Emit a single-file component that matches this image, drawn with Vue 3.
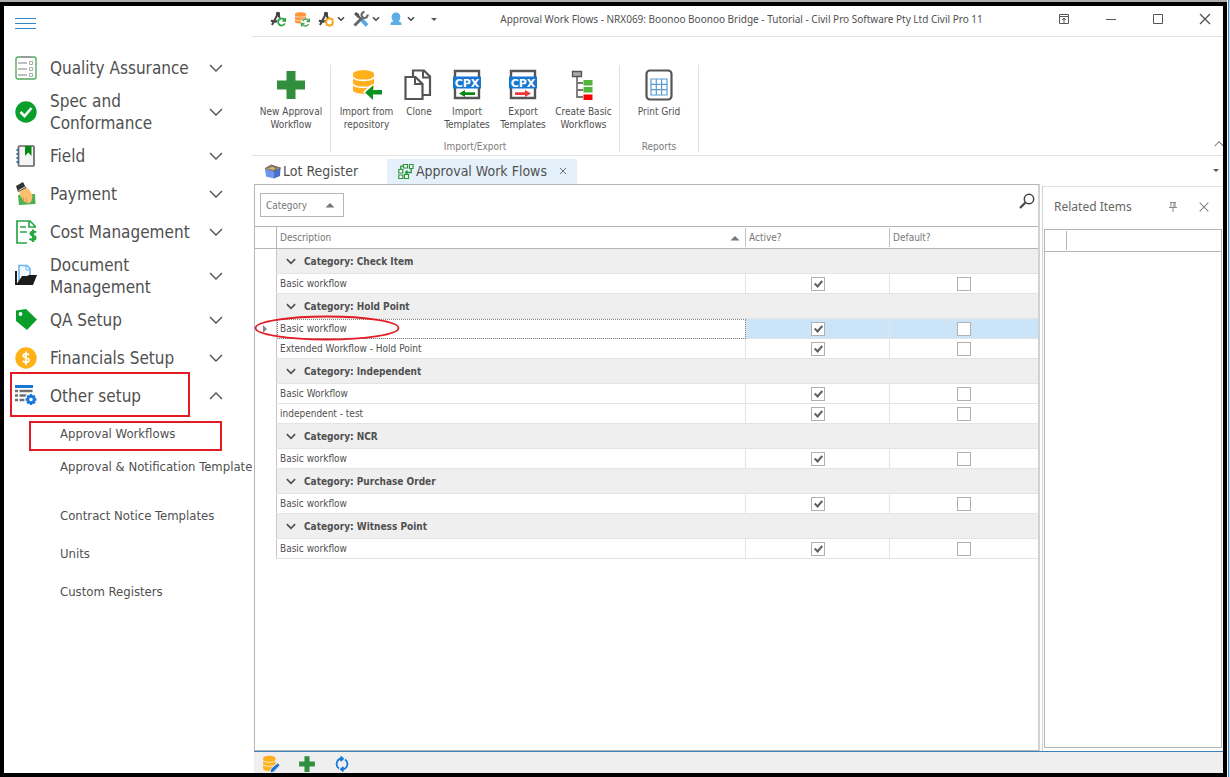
<script setup>
import { reactive, ref } from 'vue'

const icons = {
  checklist: '<rect x="1" y="1" width="20" height="22" rx="2" fill="#fff" stroke="#55a860" stroke-width="1.4"/><path d="M6 1h10" stroke="#999" stroke-width="2"/><path d="M3 7h9M3 13h9M3 19h9" stroke="#aaa" stroke-width="1.4"/><path d="M14.500 5.500h3v3h-3zM14.500 11.500h3v3h-3zM14.500 17.500h3v3h-3z" fill="none" stroke="#aaa"/>',
  tick: '<circle cx="11" cy="12" r="10.700" fill="#0a9f2b"/><path d="M5.500 12l4 4 7-8" fill="none" stroke="#fff" stroke-width="2.600"/>',
  book: '<rect x="3.500" y="2" width="15.500" height="20" rx="1" fill="#f6f6f6" stroke="#666" stroke-width="1.700"/><path d="M10 2h6.500v10l-3.200-3.500L10 12z" fill="#068a12"/><path d="M1.500 6h2M1.500 10h2M1.500 14h2M1.500 18h2" stroke="#2d6ea8" stroke-width="2"/>',
  hand: '<path d="M3 13l17-1 .5 10L4 23z" fill="#4caf50"/><path d="M4 8l7-3c4 3 6 6 6.500 10l-1.500 5-3 1.500-4-2-4-6z" fill="#fbbf70"/><path d="M9 20l-1-5M12 21l-1-6" stroke="#d99545" stroke-width=".8"/><path d="M1 4l7-4 3 6-8 4z" fill="#333"/><path d="M3.500 8.500L10 5" stroke="#eee" stroke-width="1"/>',
  cost: '<path d="M20 8V6l-5-5H2v22h10M14 1v6h6" fill="none" stroke="#28a745" stroke-width="1.700"/><path d="M5 7h6M5 12h7" stroke="#28a745" stroke-width="1.600"/><path d="M21 12.500c-1-1-5-1.500-5.500.800-.5 3 5.500 1.500 5 4.700-.4 2.500-4.500 2.200-6 .8M18 9.500v12.500" fill="none" stroke="#28a745" stroke-width="2.200"/>',
  folder: '<path d="M4 19V1.500h8l3 3V15" fill="#f4faff" stroke="#66b5ee" stroke-width="1.500"/><path d="M11 2v4h4" fill="none" stroke="#66b5ee"/><path d="M0 7v14h2V7z" fill="#1c1c1c"/><path d="M1 21l6-9h5l2-1h8l-4 10z" fill="#1c1c1c"/>',
  tag: '<path d="M1 2.500L11 1l11 10.500L12 22 1 13z" fill="#0a9f2b"/><circle cx="5.500" cy="6" r="1.900" fill="#fff"/>',
  coin: '<circle cx="11" cy="12" r="10.700" fill="#ffb118"/><path d="M14 8.800c-1.300-1.300-5.500-1.600-5.800.7-.2 2.800 6 1.600 5.800 4.800-.3 2.400-4.600 2.100-6.200.7M11 5.500v13.500" fill="none" stroke="#fff" stroke-width="1.700"/>',
  listgear: '<path d="M0 1h18v3H0z" fill="#1976d2"/><path d="M0 7h3M4.500 7h13M0 11.500h3M4.500 11.500h7M0 16h3M4.500 16h5" stroke="#707070" stroke-width="2.600"/><circle cx="16" cy="15.500" r="6.500" fill="#fff"/><circle cx="16" cy="15.500" r="3.200" fill="#fff" stroke="#1b79dd" stroke-width="2.800"/><path d="M16 10v2M16 19v2M10.500 15.500h2M19.500 15.500h2M12.200 11.700l1.500 1.500M18.300 17.800l1.500 1.500M12.200 19.300l1.500-1.500M18.300 13.200l1.500-1.500" stroke="#1b79dd" stroke-width="2.400"/>',
  compassSync: '<path d="M2 14L7.500 3.500M8 3l4.500 10M1 9.500c4 2 7 1 9-1" stroke="#444" stroke-width="2" fill="none"/><circle cx="8" cy="3" r="2.200" fill="#444"/><circle cx="11.500" cy="11" r="4.400" fill="#fff"/><path d="M14.800 9.500a3.500 3.500 0 1 0 0 3M15.500 7v3h-3" fill="none" stroke="#22a33c" stroke-width="1.700"/>',
  dbSync: '<path d="M1 3c0-2.500 11-2.500 11 0v8c0 2-11 2-11 0z" fill="#ff963c"/><path d="M1 5c1 1.500 10 1.500 11 0M1 8.500c1 1.500 10 1.500 11 0" fill="none" stroke="#fff" stroke-width=".6"/><circle cx="11.500" cy="11.500" r="4.600" fill="#fff"/><path d="M15 10.500a3.500 3.500 0 0 0-6.500-.5M8 12.500a3.500 3.500 0 0 0 6.500.5M15.500 7.500v3h-3M7.500 15.500v-3h3" fill="none" stroke="#4aa35c" stroke-width="1.400"/>',
  compassGear: '<path d="M2 14L7.500 3.500M8 3l4.500 10M1 9.500c4 2 7 1 9-1" stroke="#444" stroke-width="2" fill="none"/><circle cx="8" cy="3" r="2.200" fill="#444"/><circle cx="11.500" cy="11" r="3.400" fill="#fff" stroke="#f6ab20" stroke-width="1.900"/><path d="M11.500 5.800v2M11.500 14v2M6.300 11h2M14.700 11h2M7.900 7.400l1.300 1.300M13.800 13.300l1.300 1.300M7.900 14.600l1.300-1.300M13.800 8.700l1.300-1.300" stroke="#f6ab20" stroke-width="1.600"/>',
  tools: '<path d="M3 3l8 8" stroke="#555" stroke-width="2"/><path d="M1 3l2-2 3 2 .5 2.500L5 7z" fill="#555"/><path d="M1.500 14.500L9 7" stroke="#666" stroke-width="3"/><path d="M14.500 3.500a3 3 0 1 1-3-2.500" fill="none" stroke="#666" stroke-width="2.200"/><path d="M9 9l5 5.500" stroke="#55a7ee" stroke-width="4"/>',
  user: '<path d="M2.500 14c0-3.500 2-3.500 3-3.500-3-3-2.500-9 2.500-9s5.500 6 2.500 9c1 0 3 0 3 3.500z" fill="#5aaee4"/>',
  plus: '<path d="M11.500 2h9v9.500H30v9h-9.500V30h-9v-9.500H2v-9h9.500z" fill="#2f8f3c"/>',
  dbImport: '<path d="M2 5c0-5 21-5 21 0v16c0 5-21 5-21 0z" fill="#ffb01c"/><path d="M2 8c2 4.500 19 4.500 21 0M2 15c2 4.500 19 4.500 21 0" fill="none" stroke="#fff" stroke-width="1.600"/><path d="M12 23l9-8v5h10v7H21v4z" fill="#fff"/><path d="M14 23.500l8-7V21h9v4.500h-9V31z" fill="#0a9422"/>',
  clone: '<path d="M10 8V1.500h11l6 6V26h-8" fill="#fff" stroke="#555" stroke-width="2.200"/><path d="M20 2v6.500h7" fill="none" stroke="#555" stroke-width="2"/><path d="M2.500 8h10l7 7v15h-17z" fill="#fff" stroke="#555" stroke-width="2.200"/><path d="M12 8.500V15h7" fill="none" stroke="#555" stroke-width="2"/>',
  cpxImport: '<path d="M4 2h24v27H4z" fill="#fff" stroke="#555" stroke-width="2.400"/><path d="M8 24.500l6-3.500v2.300h10v2.600H14V28z" fill="#078a12"/><path d="M2 7.500h28v12H2z" fill="#1677d2"/><text x="16" y="17.500" text-anchor="middle" font-family="DejaVu Sans, sans-serif" font-weight="700" font-size="11" fill="#fff">CPX</text>',
  cpxExport: '<path d="M4 2h24v27H4z" fill="#fff" stroke="#555" stroke-width="2.400"/><path d="M24 24.500L18 21v2.300H8v2.600h10V28z" fill="#f13838"/><path d="M2 7.500h28v12H2z" fill="#1677d2"/><text x="16" y="17.500" text-anchor="middle" font-family="DejaVu Sans, sans-serif" font-weight="700" font-size="11" fill="#fff">CPX</text>',
  tree: '<path d="M9 6v23M9 14h6M9 21h6M9 28h6" fill="none" stroke="#777" stroke-width="1.800"/><path d="M4.500 2.500h9V7.500h-9z" fill="#aaa" stroke="#555" stroke-width="1.300"/><path d="M15.500 11h9v5.500h-9zM15.500 18h9v5.500h-9z" fill="#52b43a"/><path d="M15.500 25.500h9V31h-9z" fill="#f00"/>',
  printGrid: '<rect x="3.500" y="1.500" width="25" height="29" rx="3.500" fill="#fff" stroke="#555" stroke-width="2.200"/><path d="M8 10h16v16H8zM8 15.300h16M8 20.600h16M13.300 10v16M18.600 10v16" fill="none" stroke="#5b9bd5" stroke-width="1.200"/>',
  lot: '<path d="M0 6l9 2v7.500l-8-2z" fill="#6f95ef"/><path d="M9 8l6.500-3-.5 8-6 2.500z" fill="#4b6fc9"/><path d="M0 5.500L6 2l9.500 3L9 8z" fill="#c9b27c"/><path d="M3 5l4-2 5 2-3 2M0 5.500L6 2l9.500 3L9 8z" fill="none" stroke="#55504a" stroke-width=".8"/>',
  flow: '<path d="M5.500 1.500h4v3.500h-4zM11.500 1.500H15v4h-3.500zM.8 6.500h4v3.500h-4zM.8 12h4v3.500h-4zM6.500 11.500h4v4h-4z" fill="#fff" stroke="#2c9438" stroke-width="1.200"/><path d="M2.800 6V3.200h2.500M13.200 6v3.500h-5M9.500 7.500l-2 2 2 2" fill="none" stroke="#2c9438" stroke-width="1.300"/>',
  search: '<circle cx="10" cy="6" r="4.700" fill="none" stroke="#444" stroke-width="1.500"/><path d="M6.500 9.500L1 15" stroke="#444" stroke-width="2.200"/>',
  pin: '<path d="M5 3.500h6M6 3.500v5M10 3.500v5M9 4v4.500M4 8.500h8M8 8.500V13" fill="none" stroke="#888" stroke-width="1"/>',
  close: '<path d="M3 3l10 10M13 3L3 13" stroke="currentColor" stroke-width="1.300"/>',
  minimise: '<path d="M3 8.500h10" stroke="#555"/>',
  maximise: '<path d="M3.500 3.500h9v9h-9z" fill="none" stroke="#555"/>',
  ribbonToggle: '<path d="M3.500 3.500h9v9h-9zM3 5.500h10M8 12V7M6 9l2-2 2 2" fill="none" stroke="#555"/>',
  chevron: '<path d="M2 5l6 6 6-6" fill="none" stroke="currentColor" stroke-width="1.400"/>',
  chevronUp: '<path d="M2 11l6-6 6 6" fill="none" stroke="currentColor" stroke-width="1.400"/>',
  groupOpen: '<path d="M2.500 5.500L8 11l5.500-5.500" fill="none" stroke="currentColor" stroke-width="2.200"/>',
  groupClosed: '<path d="M5.500 2.500L11 8l-5.500 5.500" fill="none" stroke="currentColor" stroke-width="2.200"/>',
  smallChevron: '<path d="M4.500 6l3.500 3.500L11.500 6" fill="none" stroke="#444" stroke-width="1.700"/>',
  caret: '<path d="M5 7h6l-3 3z" fill="#555"/>',
  sortUp: '<path d="M3.500 10.500h9L8 6z" fill="#777"/>',
  dbEdit: '<path d="M1 3c0-3 11-3 11 0v9c0 3-11 3-11 0z" fill="#ffb01c"/><path d="M1 5c1 2 10 2 11 0M1 8.500c1 2 10 2 11 0" fill="none" stroke="#fff" stroke-width=".7"/><path d="M7 16l1-4 6-5 2 2-5.500 6z" fill="#1976d2" stroke="#efefef" stroke-width=".8"/>',
  refresh: '<path d="M8 2.500A5.500 5.500 0 0 0 5 12.500M8 13.500A5.500 5.500 0 0 0 11 3.500M6.500 .5L9 2.700 6.500 5M9.500 11L7 13.300 9.500 15.500" fill="none" stroke="#1b79dd" stroke-width="1.800"/>'
}

const nav = [
  { label: 'Quality Assurance', icon: 'checklist' },
  { label: 'Spec and Conformance', icon: 'tick', tall: true },
  { label: 'Field', icon: 'book' },
  { label: 'Payment', icon: 'hand' },
  { label: 'Cost Management', icon: 'cost' },
  { label: 'Document Management', icon: 'folder', tall: true },
  { label: 'QA Setup', icon: 'tag' },
  { label: 'Financials Setup', icon: 'coin' },
  { label: 'Other setup', icon: 'listgear', open: true }
]

const subNav = [
  { label: 'Approval Workflows', marked: true },
  { label: 'Approval & Notification Templates', tall: true },
  { label: 'Contract Notice Templates' },
  { label: 'Units' },
  { label: 'Custom Registers' }
]

const quick = [
  { icon: 'compassSync', label: 'Refresh project' },
  { icon: 'dbSync', label: 'Refresh data' },
  { icon: 'compassGear', label: 'Project settings', menu: true },
  { icon: 'tools', label: 'Tools', menu: true },
  { icon: 'user', label: 'User', menu: true }
]

const windowButtons = [
  { icon: 'ribbonToggle', label: 'Ribbon display' },
  { icon: 'minimise', label: 'Minimise' },
  { icon: 'maximise', label: 'Maximise' },
  { icon: 'close', label: 'Close' }
]

const ribbon = [
  { caption: '', size: 'narrow', buttons: [{ icon: 'plus', lines: ['New Approval', 'Workflow'], size: 'large' }] },
  {
    caption: 'Import/Export',
    size: 'wide',
    buttons: [
      { icon: 'dbImport', lines: ['Import from', 'repository'], size: 'medium' },
      { icon: 'clone', lines: ['Clone'], size: 'tiny' },
      { icon: 'cpxImport', lines: ['Import', 'Templates'], size: 'small' },
      { icon: 'cpxExport', lines: ['Export', 'Templates'], size: 'small' },
      { icon: 'tree', lines: ['Create Basic', 'Workflows'], size: 'medium' }
    ]
  },
  { caption: 'Reports', size: 'narrow', buttons: [{ icon: 'printGrid', lines: ['Print Grid'], size: 'large' }] }
]

const row = (name, current = false) => ({ name, active: true, isDefault: false, current })
const groups = reactive([
  { name: 'Check Item', open: true, rows: [row('Basic workflow')] },
  { name: 'Hold Point', open: true, rows: [row('Basic workflow', true), row('Extended Workflow - Hold Point')] },
  { name: 'Independent', open: true, rows: [row('Basic Workflow'), row('independent - test')] },
  { name: 'NCR', open: true, rows: [row('Basic workflow')] },
  { name: 'Purchase Order', open: true, rows: [row('Basic workflow')] },
  { name: 'Witness Point', open: true, rows: [row('Basic workflow')] }
])
const showSub = ref(true)
</script>

<template>
  <div class="screen">
    <div class="window">
      <aside class="sidebar">
        <button class="burger" aria-label="Menu"><i></i><i></i><i></i></button>
        <nav>
          <template v-for="item in nav" :key="item.label">
            <button class="nav-row" :class="{ tall: item.tall, marked: item.open }" @click="item.open && (showSub = !showSub)">
              <svg class="nav-icon" viewBox="0 0 22 24" v-html="icons[item.icon]"></svg>
              <span class="nav-label">{{ item.label }}</span>
              <svg class="i16" viewBox="0 0 16 16" v-html="item.open ? icons.chevronUp : icons.chevron"></svg>
            </button>
          </template>
          <div v-if="showSub" class="sub">
            <a v-for="s in subNav" :key="s.label" href="#" :class="{ tall: s.tall, marked: s.marked }">{{ s.label }}</a>
          </div>
        </nav>
      </aside>

      <main class="main">
        <header class="titlebar">
          <div class="quick">
            <button v-for="q in quick" :key="q.icon" :class="{ menu: q.menu }" :aria-label="q.label">
              <svg class="i16" viewBox="0 0 16 16" v-html="icons[q.icon]"></svg>
              <svg v-if="q.menu" class="i14" viewBox="0 0 16 16" v-html="icons.smallChevron"></svg>
            </button>
            <button class="more" aria-label="Customise toolbar"><svg class="i16" viewBox="0 0 16 16" v-html="icons.caret"></svg></button>
          </div>
          <h1>Approval Work Flows - NRX069: Boonoo Boonoo Bridge - Tutorial - Civil Pro Software Pty Ltd Civil Pro 11</h1>
          <div class="winbtns">
            <button v-for="b in windowButtons" :key="b.icon" :aria-label="b.label">
              <svg class="i16" viewBox="0 0 16 16" v-html="icons[b.icon]"></svg>
            </button>
          </div>
        </header>

        <section class="ribbon">
          <div v-for="g in ribbon" :key="g.size + g.caption" class="rgroup" :class="g.size">
            <div class="rbuttons">
              <button v-for="b in g.buttons" :key="b.icon" class="rbtn" :class="b.size">
                <svg viewBox="0 0 32 32" v-html="icons[b.icon]"></svg>
                <span v-for="l in b.lines" :key="l">{{ l }}</span>
              </button>
            </div>
            <div class="rcaption">{{ g.caption }}</div>
          </div>
          <button class="collapse" aria-label="Collapse ribbon"><svg class="i12" viewBox="0 0 16 16" v-html="icons.chevronUp"></svg></button>
        </section>

        <div class="tabs">
          <button class="tab"><svg class="i16" viewBox="0 0 16 16" v-html="icons.lot"></svg>Lot Register</button>
          <div class="tab active">
            <button class="tab-name"><svg class="i16" viewBox="0 0 16 16" v-html="icons.flow"></svg>Approval Work Flows</button>
            <button class="tab-close" aria-label="Close tab"><svg viewBox="0 0 16 16" v-html="icons.close"></svg></button>
          </div>
          <button class="tab-menu" aria-label="Tab list"><svg class="i16" viewBox="0 0 16 16" v-html="icons.caret"></svg></button>
        </div>

        <div class="content">
          <section class="grid">
            <div class="group-panel">
              <button class="group-chip">Category<svg class="i16" viewBox="0 0 16 16" v-html="icons.sortUp"></svg></button>
              <button class="search" aria-label="Search"><svg class="i16" viewBox="0 0 16 16" v-html="icons.search"></svg></button>
            </div>
            <table>
              <colgroup><col class="c-ind" /><col /><col class="c-active" /><col class="c-default" /></colgroup>
              <thead>
                <tr>
                  <th></th>
                  <th><div class="head"><span>Description</span><svg class="i16" viewBox="0 0 16 16" v-html="icons.sortUp"></svg></div></th>
                  <th><div class="head">Active?</div></th>
                  <th><div class="head">Default?</div></th>
                </tr>
              </thead>
              <tbody v-for="g in groups" :key="g.name">
                <tr class="grow">
                  <td class="ind"></td>
                  <td colspan="3">
                    <button @click="g.open = !g.open">
                      <svg class="i12" viewBox="0 0 16 16" v-html="g.open ? icons.groupOpen : icons.groupClosed"></svg>Category: {{ g.name }}
                    </button>
                  </td>
                </tr>
                <template v-if="g.open">
                  <tr v-for="r in g.rows" :key="r.name" class="drow" :class="{ current: r.current }">
                    <td class="ind">
                      <i v-if="r.current" class="pointer"></i>
                      <svg v-if="r.current" class="ring" viewBox="0 0 146 26"><ellipse cx="73" cy="13" rx="71.500" ry="11.500" fill="none" stroke="#e31b23" stroke-width="1.800" /></svg>
                    </td>
                    <td class="name">{{ r.name }}</td>
                    <td class="check"><input v-model="r.active" type="checkbox" :aria-label="r.name + ' active'" /></td>
                    <td class="check last"><input v-model="r.isDefault" type="checkbox" :aria-label="r.name + ' default'" /></td>
                  </tr>
                </template>
              </tbody>
            </table>
          </section>

          <aside class="related">
            <div class="rel-head">
              <h2>Related Items</h2>
              <button aria-label="Pin"><svg class="i16" viewBox="0 0 16 16" v-html="icons.pin"></svg></button>
              <button aria-label="Close panel"><svg class="i14" viewBox="0 0 16 16" v-html="icons.close"></svg></button>
            </div>
            <div class="rel-body"><div class="rel-cols"><i></i></div></div>
          </aside>
        </div>

        <footer class="status">
          <button aria-label="Edit data"><svg class="i18" viewBox="0 0 16 16" v-html="icons.dbEdit"></svg></button>
          <button aria-label="Add"><svg class="i18" viewBox="0 0 32 32" v-html="icons.plus"></svg></button>
          <button aria-label="Refresh"><svg class="i16" viewBox="0 0 16 16" v-html="icons.refresh"></svg></button>
        </footer>
      </main>
    </div>
  </div>
</template>

<style>
body { background: #fff; }
</style>

<style scoped>
*, *::before, *::after { box-sizing: border-box; }
.screen {
  height: 100vh;
  padding: 2px 3px 0 0;
  background: linear-gradient(90deg, #fff 0 1px, #3d8fd0 1px 2px, #b9d4ea 2px) right / 3px 100% no-repeat, linear-gradient(#adadb0, #adadb0) top / 100% 2px no-repeat;
  font-family: "DejaVu Sans Condensed", "DejaVu Sans", sans-serif;
  font-size: 10px;
  color: #505050;
}
.window { display: flex; height: 100%; border: 4px solid #000; background: #fff; overflow: hidden; }
button { display: inline-flex; align-items: center; margin: 0; padding: 0; border: 0; background: none; font: inherit; color: inherit; cursor: pointer; }
svg { display: block; flex: none; }
.i12 { width: 12px; height: 12px; }
.i14 { width: 14px; height: 14px; }
.i16 { width: 16px; height: 16px; }
.i18 { width: 18px; height: 18px; }

.sidebar { flex: none; width: 248px; overflow: hidden; }
.burger { display: flex; flex-direction: column; gap: 4px; align-items: stretch; width: 21px; margin: 12px 0 20px 11px; }
.burger i { height: 1px; background: #2f86cc; }
.nav-row { position: relative; display: flex; width: 100%; height: 38px; padding: 0 28px 0 11px; text-align: left; font-size: 17px; line-height: 22px; }
.nav-row.tall { height: 50px; }
.nav-icon { width: 22px; height: 24px; margin-right: 13px; }
.nav-label { flex: 1; }
.nav-row.marked::after { content: ""; position: absolute; left: 6px; top: -5px; width: 180px; height: 45px; border: 2px solid #e31b23; }
.sub a { position: relative; display: block; height: 38px; padding-left: 56px; font-size: 13px; line-height: 38px; color: inherit; text-decoration: none; white-space: nowrap; }
.sub a.tall { height: 44px; line-height: 28px; }
.sub a.marked::after { content: ""; position: absolute; left: 25px; top: 6px; width: 193px; height: 30px; border: 2px solid #e31b23; }

.main { flex: 1; min-width: 0; display: flex; flex-direction: column; }
.titlebar { display: flex; align-items: center; height: 31px; padding-right: 6px; padding-bottom: 4px; border-bottom: 1px solid #e2e2e2; }
.quick { display: flex; align-items: center; width: 189px; padding-left: 18px; gap: 8px; }
.quick .menu { margin-right: -3px; }
.quick .more { margin-left: 3px; }
.titlebar h1 { flex: 1; margin: 0; padding-right: 10px; text-align: center; font-family: "Noto Sans", sans-serif; font-size: 10px; font-weight: 400; white-space: nowrap; }
.winbtns { display: flex; gap: 23px; }
.winbtns button { width: 24px; justify-content: center; }

.ribbon { position: relative; display: flex; height: 119px; padding: 28px 0 3px; border-bottom: 1px solid #e2e2e2; }
.rgroup { display: flex; flex-direction: column; justify-content: space-between; border-right: 1px solid #e2e2e2; }
.rgroup.narrow { width: 79px; }
.rgroup.wide { padding: 0 3px; }
.rbuttons { display: flex; justify-content: center; padding-top: 4px; }
.rbtn { flex-direction: column; justify-content: flex-start; line-height: 13px; white-space: nowrap; }
.rbtn svg { width: 32px; height: 32px; margin-bottom: 4px; }
.rbtn.large { width: 78px; }
.rbtn.medium { width: 65px; }
.rbtn.small { width: 56px; }
.rbtn.tiny { width: 40px; }
.rcaption { text-align: center; line-height: 10px; color: #7c7c7c; }
.collapse { position: absolute; right: -2px; bottom: 5px; color: #777; }

.tabs { display: flex; align-items: flex-end; height: 28px; }
.tab { display: flex; align-items: center; height: 25px; padding-bottom: 2px; font-size: 14px; white-space: nowrap; }
.tab svg { margin-right: 2px; }
button.tab { width: 135px; padding-left: 13px; }
.tab.active { padding: 0 9px 2px 11px; gap: 11px; background: #e4f1fa; }
.tab-close svg { width: 10px; height: 10px; margin: 0; }
.tab-menu { margin: 0 -1px 6px auto; }

.content { flex: 1; min-height: 0; display: flex; gap: 2px; padding-left: 2px; }
.grid { flex: 1; min-width: 0; border: 1px solid #b5b5b5; border-right: 2px solid #d2d2d2; }
.group-panel { display: flex; justify-content: space-between; height: 41px; padding: 8px 3px 0 5px; }
.group-chip { justify-content: space-between; width: 84px; height: 24px; padding: 0 5px; border: 1px solid #b5b5b5; color: #777; }
.search { height: 16px; }
table { width: 100%; table-layout: fixed; border-collapse: separate; border-spacing: 0; }
.c-ind { width: 22px; }
.c-active { width: 144px; }
.c-default { width: 148px; }
th { height: 23px; padding: 0; border-top: 1px solid #b5b5b5; border-bottom: 1px solid #b5b5b5; font-weight: 400; color: #777; text-align: left; }
th:first-child { border-right: 1px solid #b5b5b5; }
.head { display: flex; align-items: center; justify-content: space-between; height: 19px; padding: 0 2px 0 3px; border-right: 1px solid #c2c2c2; }
th:last-child .head { border-right: 0; }
td { padding: 0; border-bottom: 1px solid #e4e4e4; }
td.ind { position: relative; border-bottom-color: #fff; border-right: 1px solid #c8c8c8; }
.grow td { height: 25px; }
.grow td + td { background: #efefef; }
.grow button { gap: 7px; height: 24px; padding-left: 8px; font-size: 10px; font-weight: 700; }
.drow td { height: 20px; }
.name { padding-left: 3px; border-right: 1px solid #e4e4e4; }
.check { text-align: center; line-height: 0; border-right: 1px solid #e4e4e4; }
.check.last { border-right: 0; }
.check input { position: relative; appearance: none; width: 14px; height: 14px; margin: 0; border: 1px solid #b0b0b0; background: #fff; vertical-align: middle; }
.check input:checked::after { content: ""; position: absolute; left: 4px; top: 1px; width: 5px; height: 8px; border: solid #606060; border-width: 0 2px 2px 0; transform: rotate(42deg); }
.current .check { background: #cce4f7; }
.current .name { outline: 1px dotted #888; outline-offset: -1px; }
.pointer { position: absolute; left: 8px; top: 6px; border: 4px solid transparent; border-left-color: #888; border-right-width: 0; }
.ring { position: absolute; left: -1px; top: -4px; width: 146px; height: 26px; z-index: 1; }

.related { flex: none; width: 181px; display: flex; flex-direction: column; margin-top: 2px; padding: 0 1px 3px; border-top: 1px solid #e2e2e2; border-left: 1px solid #d2d2d2; }
.rel-head { display: flex; align-items: center; height: 42px; padding: 0 11px 3px 10px; color: #666; }
.rel-head h2 { flex: 1; margin: 0; font-family: "Noto Sans", sans-serif; font-size: 12px; font-weight: 400; }
.rel-head button { margin-left: 16px; color: #888; }
.rel-body { flex: 1; border: 1px solid #b5b5b5; }
.rel-cols { height: 22px; padding: 1px 0 1px 21px; border-bottom: 1px solid #b5b5b5; }
.rel-cols i { display: block; height: 100%; border-left: 1px solid #b5b5b5; }

.status { display: flex; align-items: center; gap: 18px; height: 22px; margin-left: 2px; padding: 2px 0 0 8px; border-top: 1px solid #3d82bd; background: #efefef; }
</style>
